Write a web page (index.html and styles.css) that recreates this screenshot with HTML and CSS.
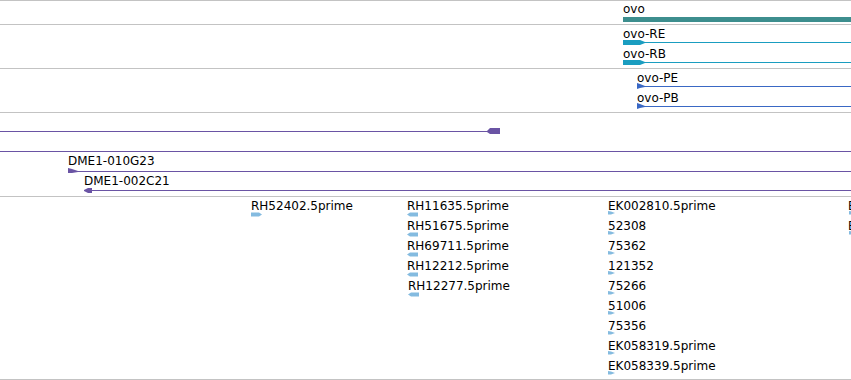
FILE: index.html
```html
<!DOCTYPE html>
<html>
<head>
<meta charset="utf-8">
<link rel="stylesheet" href="styles.css">
</head>
<body>
<div class="view">
  <div class="track t1">
    <svg class="glyphs" width="851" height="23">
      <rect x="623" y="16" width="228" height="5" fill="#3d8e8e"/>
    </svg>
    <span class="lbl" style="left:623px;top:1px">ovo</span>
  </div>

  <div class="track t2">
    <svg class="glyphs" width="851" height="43">
      <g fill="#1a9dc0">
        <rect x="645" y="17" width="206" height="1"/>
        <polygon points="623,15 640,15 645,17 645,18 640,20 623,20"/>
        <rect x="645" y="37" width="206" height="1"/>
        <polygon points="623,35 640,35 645,37 645,38 640,40 623,40"/>
      </g>
    </svg>
    <span class="lbl" style="left:623px;top:2px">ovo-RE</span>
    <span class="lbl" style="left:623px;top:22px">ovo-RB</span>
  </div>

  <div class="track t3">
    <svg class="glyphs" width="851" height="43">
      <g fill="#3a68c4">
        <rect x="641" y="17" width="210" height="1"/>
        <polygon points="637,14 640,15 645,17 645,18 640,19 637,20"/>
        <rect x="641" y="37" width="210" height="1"/>
        <polygon points="637,34 640,35 645,37 645,38 640,39 637,40"/>
      </g>
    </svg>
    <span class="lbl" style="left:637px;top:2px">ovo-PE</span>
    <span class="lbl" style="left:637px;top:22px">ovo-PB</span>
  </div>

  <div class="track t4">
    <svg class="glyphs" width="851" height="83">
      <g fill="#6a54a4">
        <rect x="0" y="18" width="490" height="1"/>
        <polygon points="487,18 490,15 500,15 500,21 490,21 487,19"/>
        <rect x="0" y="38" width="851" height="1"/>
        <rect x="72" y="58" width="779" height="1"/>
        <polygon points="68,55 72,56 78,58 78,59 72,60 68,60"/>
        <rect x="88" y="77" width="763" height="1"/>
        <polygon points="84,77 88,75 92,75 92,80 88,80 84,78"/>
      </g>
    </svg>
    <span class="lbl" style="left:68px;top:41px">DME1-010G23</span>
    <span class="lbl" style="left:84px;top:61px">DME1-002C21</span>
  </div>

  <div class="track t5">
    <svg class="glyphs" width="851" height="182">
      <g fill="#84bbe0">
        <polygon points="251,15.5 259,15.5 262,17.5 259,19.5 251,19.5"/>
        <polygon points="407,17.5 410,15.5 418,15.5 418,19.5 410,19.5"/>
        <polygon points="407,37.5 410,35.5 418,35.5 418,39.5 410,39.5"/>
        <polygon points="407,57.5 410,55.5 418,55.5 418,59.5 410,59.5"/>
        <polygon points="407,77.5 410,75.5 418,75.5 418,79.5 410,79.5"/>
        <polygon points="408,97.5 411,95.5 419,95.5 419,99.5 411,99.5"/>
      </g>
      <g fill="#84bbe0">
        <polygon points="608,14 611,14.5 615,16 611,17.5 608,17.5"/>
        <polygon points="608,34 611,34.5 615,36 611,37.5 608,37.5"/>
        <polygon points="608,54 611,54.5 615,56 611,57.5 608,57.5"/>
        <polygon points="608,74 611,74.5 615,76 611,77.5 608,77.5"/>
        <polygon points="608,94 611,94.5 615,96 611,97.5 608,97.5"/>
        <polygon points="608,114 611,114.5 615,116 611,117.5 608,117.5"/>
        <polygon points="608,134 611,134.5 615,136 611,137.5 608,137.5"/>
        <polygon points="608,154 611,154.5 615,156 611,157.5 608,157.5"/>
        <polygon points="608,174 611,174.5 615,176 611,177.5 608,177.5"/>
        <polygon points="849,14 852,14.5 856,16 852,17.5 849,17.5"/>
        <polygon points="849,34 852,34.5 856,36 852,37.5 849,37.5"/>
      </g>
    </svg>
    <span class="lbl" style="left:251px;top:2px">RH52402.5prime</span>
    <span class="lbl" style="left:407px;top:2px">RH11635.5prime</span>
    <span class="lbl" style="left:407px;top:22px">RH51675.5prime</span>
    <span class="lbl" style="left:407px;top:42px">RH69711.5prime</span>
    <span class="lbl" style="left:407px;top:62px">RH12212.5prime</span>
    <span class="lbl" style="left:408px;top:82px">RH12277.5prime</span>
    <span class="lbl" style="left:608px;top:2px">EK002810.5prime</span>
    <span class="lbl" style="left:608px;top:22px">52308</span>
    <span class="lbl" style="left:608px;top:42px">75362</span>
    <span class="lbl" style="left:608px;top:62px">121352</span>
    <span class="lbl" style="left:608px;top:82px">75266</span>
    <span class="lbl" style="left:608px;top:102px">51006</span>
    <span class="lbl" style="left:608px;top:122px">75356</span>
    <span class="lbl" style="left:608px;top:142px">EK058319.5prime</span>
    <span class="lbl" style="left:608px;top:162px">EK058339.5prime</span>
    <span class="lbl" style="left:848px;top:2px">EK058340.5prime</span>
    <span class="lbl" style="left:848px;top:22px">EK058341.5prime</span>
  </div>
</div>
</body>
</html>
```

FILE: styles.css
```css
html, body {
  margin: 0;
  padding: 0;
  background: #ffffff;
}

body {
  width: 851px;
  height: 380px;
  overflow: hidden;
  font-family: "DejaVu Sans", sans-serif;
  font-size: 12px;
  line-height: 14px;
  color: #000000;
}

.view {
  display: flex;
  flex-direction: column;
  width: 851px;
}

.track {
  position: relative;
  overflow: hidden;
  border-top: 1px solid #c3c3c3;
}

.t1 { height: 23px; }
.t2 { height: 43px; }
.t3 { height: 43px; }
.t4 { height: 83px; }
.t5 {
  height: 182px;
  border-bottom: 1px solid #c3c3c3;
}

.glyphs {
  position: absolute;
  left: 0;
  top: 0;
  display: block;
}

.lbl {
  position: absolute;
  white-space: nowrap;
}
```
